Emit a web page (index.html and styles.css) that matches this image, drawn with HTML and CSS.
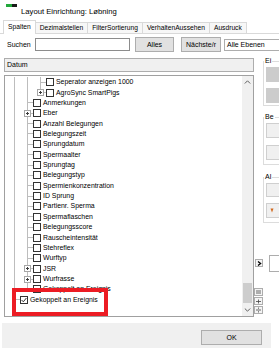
FILE: index.html
```html
<!DOCTYPE html>
<html lang="de">
<head>
<meta charset="utf-8">
<title>Layout Einrichtung</title>
<link rel="stylesheet" href="styles.css">
</head>
<body>
<div class="window">
  <div class="titlebar">
    <span class="app-icon"><i class="g"></i><i class="k"></i></span>
    <span class="title">Layout Einrichtung: Løbning</span>
  </div>
  <div class="tabs">
    <div class="tab active">Spalten</div>
    <div class="tab">Dezimalstellen</div>
    <div class="tab">FilterSortierung</div>
    <div class="tab">VerhaltenAussehen</div>
    <div class="tab">Ausdruck</div>
  </div>
  <div class="search-row">
    <span class="search-label">Suchen</span>
    <div class="input"></div>
    <div class="btn btn-alles">Alles</div>
    <div class="btn btn-next">Nächste/r</div>
    <div class="combo">Alle Ebenen</div>
  </div>
  <div class="main">
    <div class="left">
      <div class="datum">Datum</div>
      <div class="treebox">
        <div class="tree">
          <div class="row"><span class="cell line"></span><span class="cell line"></span><span class="cell tee"></span><span class="cb"></span><span class="lbl">Seperator anzeigen 1000</span></div>
          <div class="row"><span class="cell line"></span><span class="cell line"></span><span class="cell ell"><span class="exp"></span></span><span class="cb"></span><span class="lbl">AgroSync SmartPigs</span></div>
          <div class="row"><span class="cell line"></span><span class="cell tee"></span><span class="cb"></span><span class="lbl">Anmerkungen</span></div>
          <div class="row"><span class="cell line"></span><span class="cell tee"><span class="exp"></span></span><span class="cb"></span><span class="lbl">Eber</span></div>
          <div class="row"><span class="cell line"></span><span class="cell tee"></span><span class="cb"></span><span class="lbl">Anzahl Belegungen</span></div>
          <div class="row"><span class="cell line"></span><span class="cell tee"></span><span class="cb"></span><span class="lbl">Belegungszeit</span></div>
          <div class="row"><span class="cell line"></span><span class="cell tee"></span><span class="cb"></span><span class="lbl">Sprungdatum</span></div>
          <div class="row"><span class="cell line"></span><span class="cell tee"></span><span class="cb"></span><span class="lbl">Spermaalter</span></div>
          <div class="row"><span class="cell line"></span><span class="cell tee"></span><span class="cb"></span><span class="lbl">Sprungtag</span></div>
          <div class="row"><span class="cell line"></span><span class="cell tee"></span><span class="cb"></span><span class="lbl">Belegungstyp</span></div>
          <div class="row"><span class="cell line"></span><span class="cell tee"></span><span class="cb"></span><span class="lbl">Spermienkonzentration</span></div>
          <div class="row"><span class="cell line"></span><span class="cell tee"></span><span class="cb"></span><span class="lbl">ID Sprung</span></div>
          <div class="row"><span class="cell line"></span><span class="cell tee"></span><span class="cb"></span><span class="lbl">Partienr. Sperma</span></div>
          <div class="row"><span class="cell line"></span><span class="cell tee"></span><span class="cb"></span><span class="lbl">Spermaflaschen</span></div>
          <div class="row"><span class="cell line"></span><span class="cell tee"></span><span class="cb"></span><span class="lbl">Belegungsscore</span></div>
          <div class="row"><span class="cell line"></span><span class="cell tee"></span><span class="cb"></span><span class="lbl">Rauscheintensität</span></div>
          <div class="row"><span class="cell line"></span><span class="cell tee"></span><span class="cb"></span><span class="lbl">Stehreflex</span></div>
          <div class="row"><span class="cell line"></span><span class="cell tee"></span><span class="cb"></span><span class="lbl">Wurftyp</span></div>
          <div class="row"><span class="cell line"></span><span class="cell tee"><span class="exp"></span></span><span class="cb"></span><span class="lbl">JSR</span></div>
          <div class="row"><span class="cell line"></span><span class="cell tee"><span class="exp"></span></span><span class="cb"></span><span class="lbl">Wurfrasse</span></div>
          <div class="row"><span class="cell line"></span><span class="cell ell"></span><span class="cb"></span><span class="lbl">Gekoppelt an Ereignis</span></div>
          <div class="row"><span class="cell tee"></span><span class="cb checked"><svg width="6" height="6" viewBox="0 0 6 6"><path d="M0.6 3 L2.3 4.8 L5.4 1" stroke="#333" stroke-width="1" fill="none"/></svg></span><span class="lbl">Gekoppelt an Ereignis</span></div>
        </div>
        <div class="vscroll">
          <div class="arrow"><svg width="7" height="4" viewBox="0 0 7 4"><path d="M0.8 3.5 L3.5 0.8 L6.2 3.5" stroke="#606060" stroke-width="1" fill="none"/></svg></div>
          <div class="track"><div class="thumb"></div></div>
          <div class="arrow"><svg width="7" height="4" viewBox="0 0 7 4"><path d="M0.8 0.5 L3.5 3.2 L6.2 0.5" stroke="#606060" stroke-width="1" fill="none"/></svg></div>
        </div>
      </div>
    </div>
    <div class="mid">
      <div class="nav-btn"><svg width="5" height="5" viewBox="0 0 5 5"><path d="M1 0.5 L3.6 2.5 L1 4.5" stroke="#000" stroke-width="1.3" fill="none"/></svg></div>
      <div class="op-btn first"><svg width="5" height="4" viewBox="0 0 5 4"><path d="M0 1 H5 M0 3 H5" stroke="#444" stroke-width="0.8"/></svg></div>
      <div class="op-btn"><svg width="5" height="5" viewBox="0 0 5 5"><path d="M0 2.5 H5 M2.5 0.5 V4.5" stroke="#444" stroke-width="0.8"/></svg></div>
      <div class="op-btn"><svg width="5" height="6" viewBox="0 0 5 6"><path d="M0 3 H5 M2.5 0.5 V1.8 M2.5 4.2 V5.5" stroke="#444" stroke-width="0.8"/></svg></div>
    </div>
    <div class="right">
      <fieldset class="grp grp-ei">
        <legend>Ei</legend>
        <div class="gbtn dis"></div>
        <div class="gbtn dis"></div>
      </fieldset>
      <fieldset class="grp grp-be">
        <legend>Be</legend>
        <div class="gbtn light"></div>
        <div class="gbtn light gap7"></div>
      </fieldset>
      <fieldset class="grp grp-al">
        <legend>Al</legend>
        <div class="gbtn light short"></div>
        <div class="gbtn light"><svg width="4" height="5" viewBox="0 0 4 5"><path d="M0.5 0.5 L3.5 0.5 L2 4.5 Z" fill="#d2691e"/></svg></div>
      </fieldset>
      <div class="side-box"></div>
    </div>
  </div>
  <div class="footer">
    <div class="btn ok">OK</div>
  </div>
</div>
<div class="highlight"></div>
</body>
</html>
```
FILE: styles.css
```css
* { box-sizing: border-box; }
html, body { margin: 0; padding: 0; }
body {
  width: 279px;
  height: 357px;
  overflow: hidden;
  background: #ffffff;
  font-family: "Liberation Sans", Arial, sans-serif;
  color: #000;
  position: relative;
}
.window { width: 279px; height: 357px; display: flex; flex-direction: column; }

/* title bar */
.titlebar { height: 20px; display: flex; align-items: flex-start; padding-left: 6px; flex-shrink: 0; }
.app-icon { display: flex; width: 11px; height: 3px; margin-top: 4px; margin-right: 4px; }
.app-icon i { display: block; height: 3px; }
.app-icon .g { width: 6px; background: #22a83c; }
.app-icon .k { width: 5px; background: #1a1a1a; }
.title { font-size: 7.7px; line-height: 9px; margin-top: 7px; white-space: nowrap; }

/* tabs */
.tabs { height: 14px; display: flex; align-items: flex-end; padding-left: 3px; border-bottom: 1px solid #d9d9d9; flex-shrink: 0; }
.tab {
  height: 11px; padding: 0 4px; font-size: 6.7px; line-height: 10px;
  border: 1px solid #d9d9d9; border-bottom: none; background: #f7f7f7;
  margin-left: -1px; white-space: nowrap; flex-shrink: 0;
}
.tab.active { height: 14px; margin-bottom: -1px; background: #fff; line-height: 12px; margin-left: 0; position: relative; z-index: 1; }

/* search row */
.search-row { display: flex; align-items: center; height: 15px; margin-top: 3px; padding-left: 7px; font-size: 7px; overflow: hidden; flex-shrink: 0; }
.search-row > * { flex-shrink: 0; }
.search-label { width: 28px; white-space: nowrap; }
.input { width: 95px; height: 13px; border: 1px solid #8c8c8c; background: #fff; }
.btn { background: #e1e1e1; border: 1px solid #adadad; display: flex; align-items: center; justify-content: center; font-size: 7px; white-space: nowrap; }
.btn-alles { width: 39px; height: 15px; margin-left: 5px; }
.btn-next { width: 40px; height: 15px; margin-left: 7px; }
.combo { width: 70px; height: 12px; margin-left: 3px; border: 1px solid #adadad; background: #fff; padding-left: 2px; display: flex; align-items: center; white-space: nowrap; }

/* main */
.main { display: flex; height: 260px; margin-top: 5px; padding-left: 4px; flex-shrink: 0; }
.left { width: 250px; flex-shrink: 0; display: flex; flex-direction: column; }
.datum { margin-top: 1px; height: 14px; background: #f0f0f0; border: 1px solid #adadad; font-size: 7px; line-height: 12px; padding-left: 2px; }
.treebox { margin-top: 3px; height: 242px; border: 1px solid #a0a0a0; display: flex; background: #fff; }
.tree { flex: 1; padding-top: 1px; overflow: hidden; }
.row { height: 10.37px; display: flex; align-items: center; padding-left: 2px; }
.cell { width: 13px; height: 100%; flex-shrink: 0; display: flex; align-items: center; }
.cell.line { background: linear-gradient(#bdbdbd, #bdbdbd) 7px 0 / 1px 100% no-repeat; }
.cell.tee {
  background:
    linear-gradient(#bdbdbd, #bdbdbd) 7px 0 / 1px 100% no-repeat,
    linear-gradient(#bdbdbd, #bdbdbd) 7px 50% / 6px 1px no-repeat;
}
.cell.ell {
  background:
    linear-gradient(#bdbdbd, #bdbdbd) 7px 0 / 1px 50% no-repeat,
    linear-gradient(#bdbdbd, #bdbdbd) 7px 50% / 6px 1px no-repeat;
}
.exp {
  width: 7px; height: 7px; margin-left: 4px; border: 1px solid #a6a6a6;
  background:
    linear-gradient(#3c3c3c, #3c3c3c) center / 3px 1px no-repeat,
    linear-gradient(#3c3c3c, #3c3c3c) center / 1px 3px no-repeat,
    #fff;
}
.cb { width: 8px; height: 8px; border: 1px solid #333; background: #fff; flex-shrink: 0; margin-right: 2px; display: flex; align-items: center; justify-content: center; }
.lbl { font-size: 6.9px; line-height: 10px; white-space: nowrap; }

.vscroll { width: 11px; flex-shrink: 0; background: #f0f0f0; display: flex; flex-direction: column; }
.arrow { height: 12px; display: flex; align-items: center; justify-content: center; }
.track { flex: 1; display: flex; flex-direction: column; justify-content: flex-end; }
.thumb { height: 20px; margin: 0 1px 1px 1px; background: #cdcdcd; }

/* middle small buttons */
.mid { width: 9px; flex-shrink: 0; display: flex; flex-direction: column; padding-top: 202px; }
.nav-btn { width: 8px; height: 8px; margin-left: 1px; border: 1px solid #adadad; background: #f4f4f4; display: flex; align-items: center; justify-content: center; }
.op-btn { width: 9px; height: 8px; margin-top: 1px; border: 1px solid #adadad; background: #f4f4f4; display: flex; align-items: center; justify-content: center; }
.op-btn.first { margin-top: 21px; }

/* right column */
.right { width: 16px; flex-shrink: 0; overflow: hidden; }
.grp { margin: 0; padding: 0 0 0 2px; border: 1px solid #dcdcdc; border-right: none; width: 40px; min-width: 0; font-size: 7px; }
.grp legend { padding: 0 1px; margin-left: -2px; line-height: 8px; height: 8px; }
.grp-ei .gbtn:first-of-type { margin-top: 2px; }
.grp-ei .gbtn { margin-top: 6px; margin-bottom: 0; }
.grp-ei { padding-bottom: 2px; }
.grp-be { margin-top: 7px; padding-bottom: 4px; }
.grp-be .gbtn:first-of-type { margin-top: 2px; }
.grp-al { margin-top: 8px; padding-bottom: 4px; }
.grp-al .gbtn:first-of-type { margin-top: 2px; }
.gbtn { width: 30px; height: 15px; margin-top: 6px; display: flex; align-items: center; padding-left: 3px; }
.gbtn.gap7 { margin-top: 7px; }
.gbtn.short { height: 14px; }
.gbtn.dis { background: #cccccc; }
.gbtn.light { background: #f0f0f0; border: 1px solid #cfcfcf; }
.side-box { margin-top: 32px; margin-left: 6px; width: 20px; height: 17px; border: 1px solid #adadad; background: #fff; }

/* footer */
.footer { margin-top: 6px; margin-left: 2px; width: 269px; height: 25px; background: #f0f0f0; padding-top: 7px; padding-left: 199px; flex-shrink: 0; }
.ok { width: 61px; height: 15px; }

/* annotation overlay */
.highlight { position: absolute; left: 12px; top: 288px; width: 96px; height: 28px; border: 4px solid #ec1c24; }
```
